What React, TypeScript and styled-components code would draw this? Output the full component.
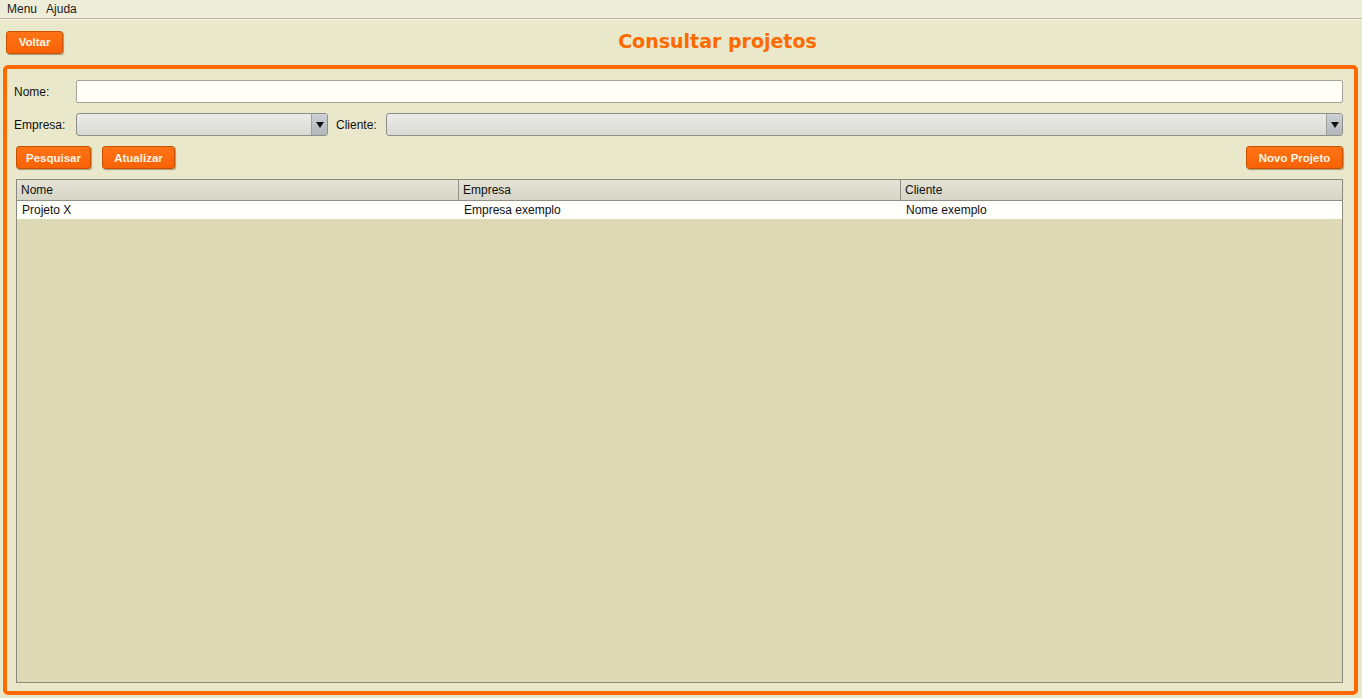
import styled, { createGlobalStyle } from "styled-components";

const GlobalStyle = createGlobalStyle`
    html, body {
        margin: 0;
        padding: 0;
        background: #eae8ca;
        font-family: "Liberation Sans", Arial, sans-serif;
        font-size: 12px;
        color: #111;
    }
    #root {
        height: 698px;
    }
`

const Page = styled.div`
    display: flex;
    flex-direction: column;
    height: 698px;
    width: 1362px;
    overflow: hidden;
`

const MenuBar = styled.div`
    display: flex;
    gap: 9px;
    height: 18px;
    padding: 0 0 0 7px;
    align-items: center;
    background: #eeedd9;
    border-bottom: 1px solid #b5b39a;
    box-shadow: 0 1px 0 #f6f5e8;
    font-size: 12px;
    color: #1b1b1b;
`

const TopRow = styled.div`
    display: flex;
    align-items: center;
    height: 46px;
    padding: 0 6px;
`

const Title = styled.h1`
    flex: 1;
    margin: -3px 0 0 0;
    padding-left: 16px;
    text-align: center;
    font-family: "DejaVu Sans", Verdana, sans-serif;
    font-size: 19px;
    font-weight: bold;
    color: #ff6a00;
`

const OrangeButton = styled.button<{ $w: number }>`
    width: ${p => p.$w}px;
    height: 23px;
    padding: 0;
    border: 1px solid #c85000;
    border-radius: 3px;
    background: linear-gradient(#ff7416, #f86205);
    box-shadow: 1px 1px 1px rgba(80, 60, 20, 0.45);
    color: #fff5e6;
    font-family: "Liberation Sans", Arial, sans-serif;
    font-size: 11.5px;
    font-weight: bold;
    cursor: pointer;
`

const Panel = styled.div`
    flex: 1;
    margin: 0 4px 3px 3px;
    border: 4px solid #ff6a00;
    border-radius: 5px;
    display: flex;
    flex-direction: column;
    padding: 11px 11px 8px 7px;
`

const FieldRow = styled.div`
    display: flex;
    align-items: center;
    height: 23px;
    margin-bottom: 10px;
`

const Label = styled.label<{ $w?: number; $pad?: number }>`
    width: ${p => p.$w ?? 62}px;
    padding-left: ${p => p.$pad ?? 0}px;
    font-size: 12px;
    color: #111;
    flex-shrink: 0;
`

const TextInput = styled.input`
    flex: 1;
    height: 23px;
    box-sizing: border-box;
    border: 1px solid #a4a39a;
    border-radius: 2px;
    background: #fffff7;
`

const Combo = styled.div<{ $w?: number }>`
    display: flex;
    height: 23px;
    box-sizing: border-box;
    border: 1px solid #8f8f8a;
    border-radius: 3px;
    background: linear-gradient(#ebebe8, #d9d9d4);
    overflow: hidden;
    ${p => p.$w ? `width: ${p.$w}px;` : "flex: 1;"}
`

const ComboBody = styled.div`
    flex: 1;
`

const ComboArrow = styled.div`
    width: 15px;
    display: flex;
    align-items: center;
    justify-content: center;
    border-left: 1px solid #a0a09a;
    background: linear-gradient(#cdd0d4, #b3b7bc);
    &::after {
        content: "";
        border-left: 4px solid transparent;
        border-right: 4px solid transparent;
        border-top: 6px solid #111;
    }
`

const ButtonRow = styled.div`
    display: flex;
    gap: 11px;
    padding-left: 2px;
    margin-bottom: 10px;
`

const Spacer = styled.div`
    flex: 1;
`

const Table = styled.div`
    flex: 1;
    margin-left: 2px;
    border: 1px solid #8a8a7c;
    background: #dcd9b4;
    display: flex;
    flex-direction: column;
`

const HeaderRow = styled.div`
    display: grid;
    grid-template-columns: 442px 442px 1fr;
    height: 20px;
    background: linear-gradient(#e4e3d6, #d6d5c8);
    border-bottom: 1px solid #8f8f84;
`

const HeaderCell = styled.div`
    padding-left: 4px;
    line-height: 20px;
    border-right: 1px solid #8f8f84;
    &:last-child { border-right: none; }
`

const DataRow = styled.div`
    display: grid;
    grid-template-columns: 442px 442px 1fr;
    height: 18px;
    background: #fffffb;
`

const Cell = styled.div`
    padding-left: 5px;
    line-height: 18px;
`

const projetos = [
    { nome: "Projeto X", empresa: "Empresa exemplo", cliente: "Nome exemplo" },
]

export default function App() {
    return (
        <Page>
            <GlobalStyle />
            <MenuBar>
                <span>Menu</span>
                <span>Ajuda</span>
            </MenuBar>
            <TopRow>
                <OrangeButton $w={57}>Voltar</OrangeButton>
                <Title>Consultar projetos</Title>
            </TopRow>
            <Panel>
                <FieldRow>
                    <Label>Nome:</Label>
                    <TextInput />
                </FieldRow>
                <FieldRow>
                    <Label>Empresa:</Label>
                    <Combo $w={252}><ComboBody /><ComboArrow /></Combo>
                    <Label $w={50} $pad={8}>Cliente:</Label>
                    <Combo><ComboBody /><ComboArrow /></Combo>
                </FieldRow>
                <ButtonRow>
                    <OrangeButton $w={75}>Pesquisar</OrangeButton>
                    <OrangeButton $w={73}>Atualizar</OrangeButton>
                    <Spacer />
                    <OrangeButton $w={97}>Novo Projeto</OrangeButton>
                </ButtonRow>
                <Table>
                    <HeaderRow>
                        <HeaderCell>Nome</HeaderCell>
                        <HeaderCell>Empresa</HeaderCell>
                        <HeaderCell>Cliente</HeaderCell>
                    </HeaderRow>
                    {projetos.map((p, i) => (
                        <DataRow key={i}>
                            <Cell>{p.nome}</Cell>
                            <Cell>{p.empresa}</Cell>
                            <Cell>{p.cliente}</Cell>
                        </DataRow>
                    ))}
                </Table>
            </Panel>
        </Page>
    )
}
